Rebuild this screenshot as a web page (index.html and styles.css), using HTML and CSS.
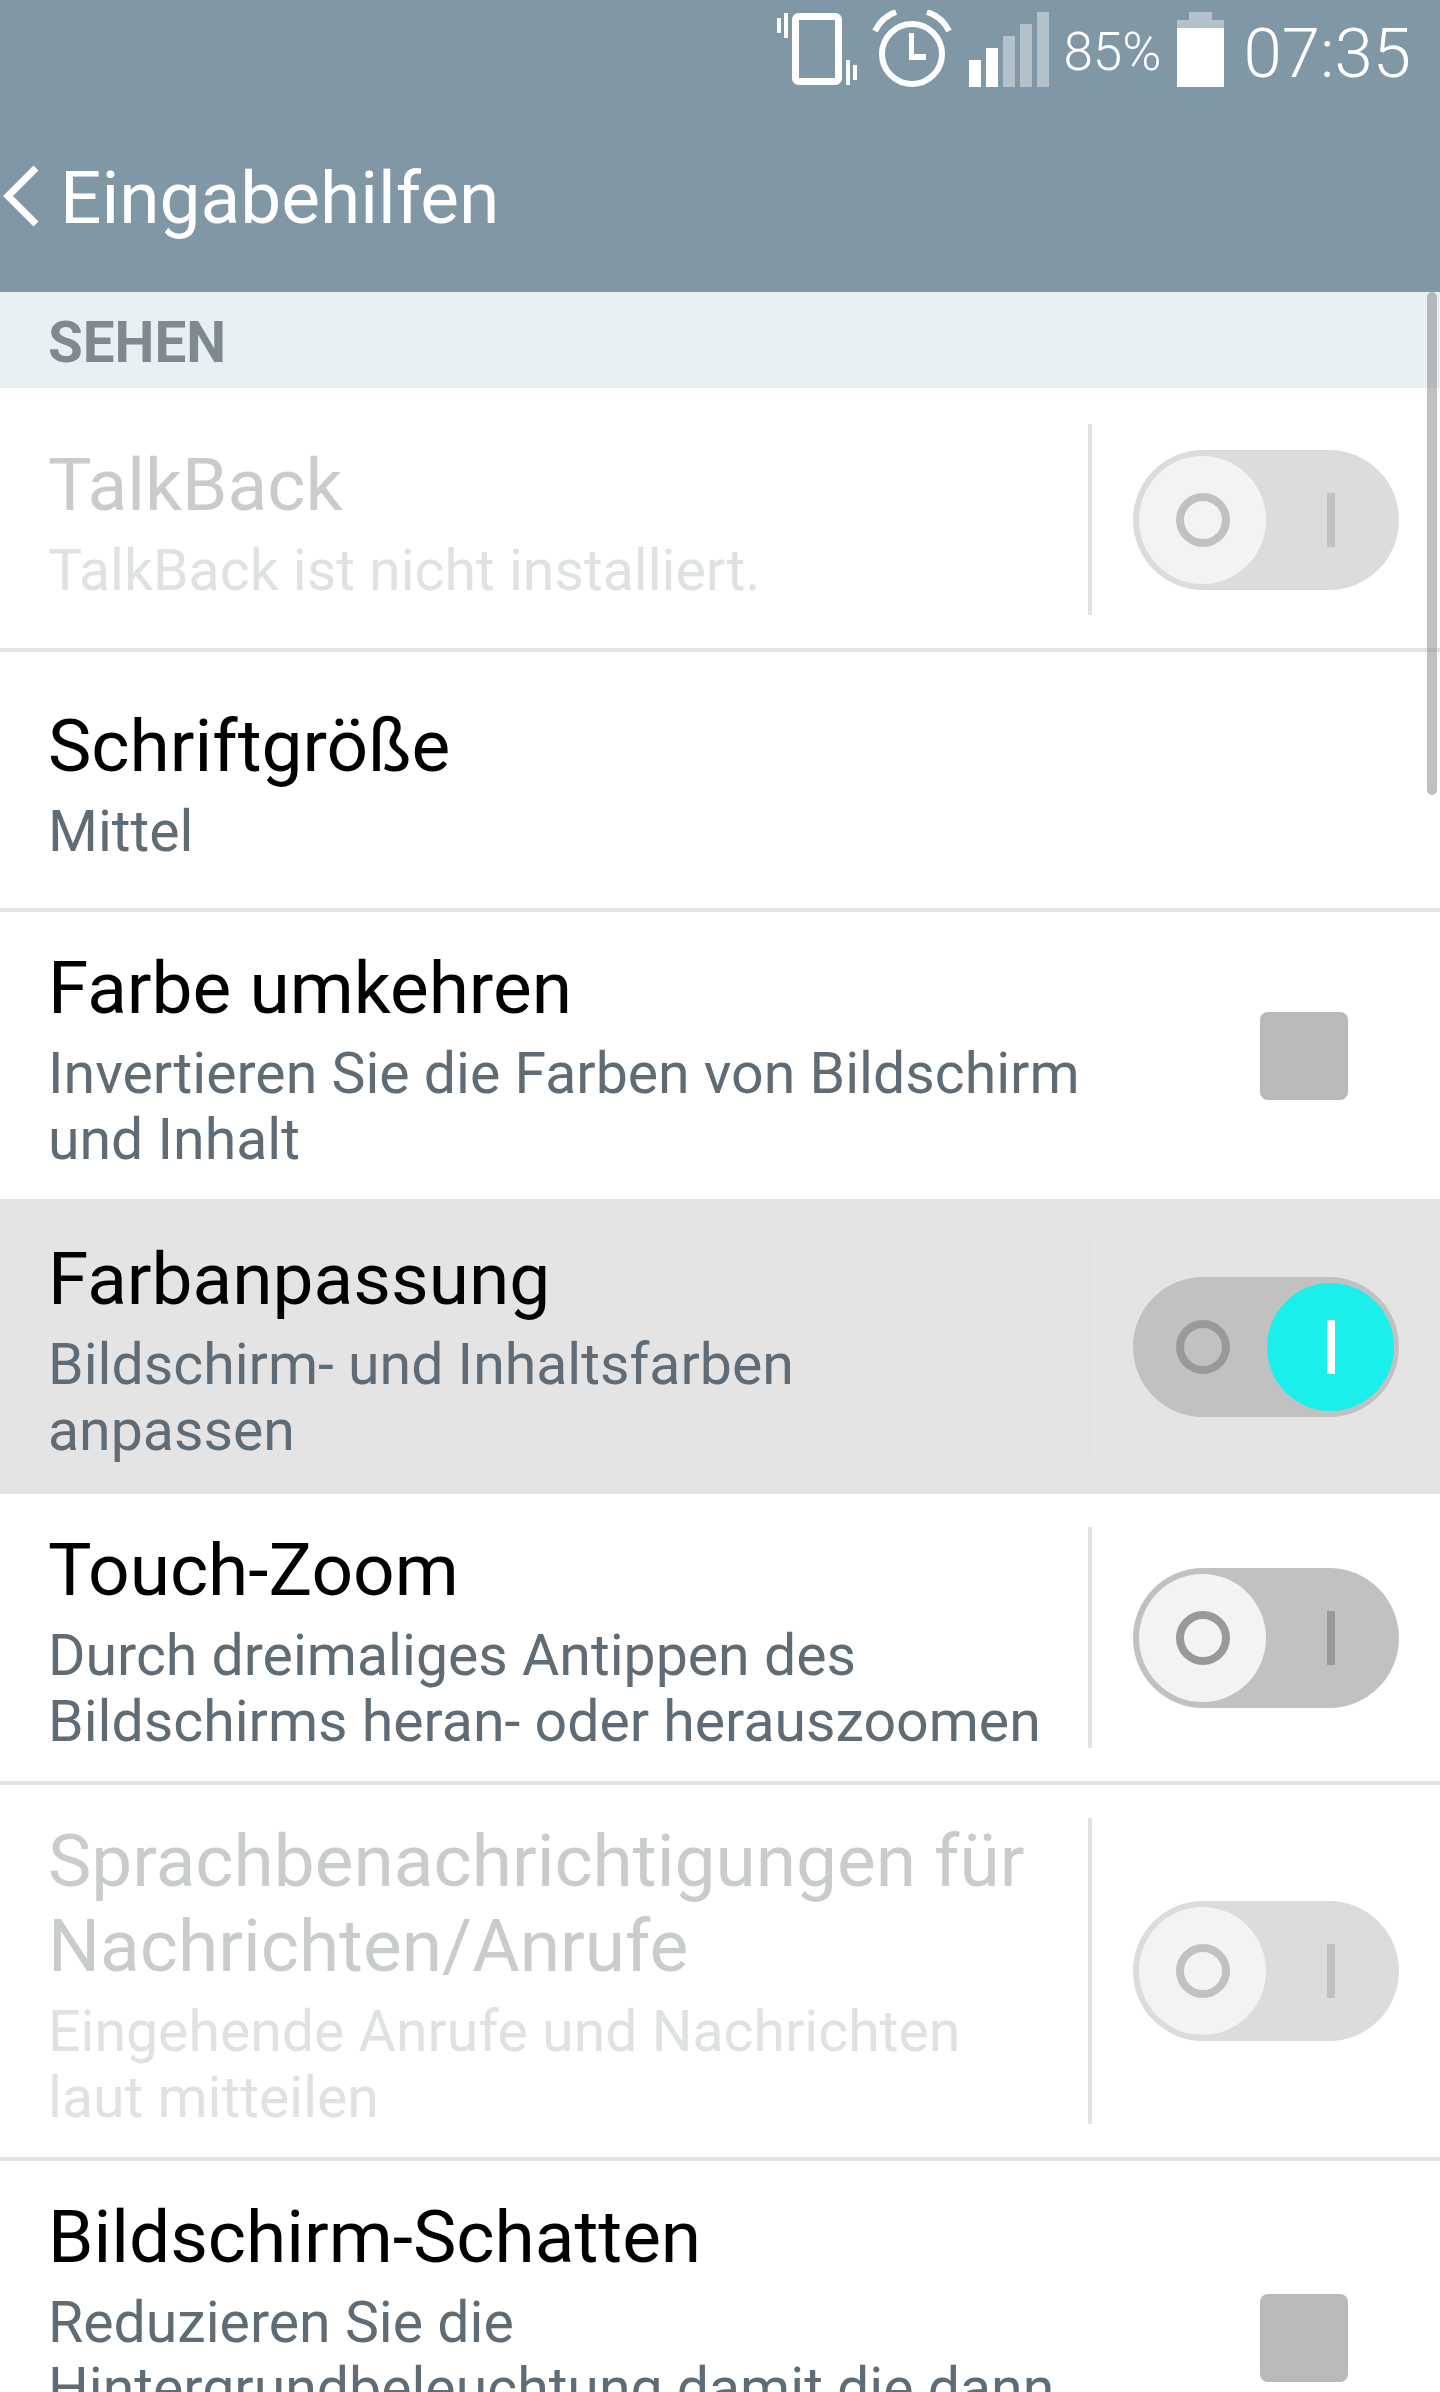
FILE: index.html
```html
<!DOCTYPE html>
<html>
<head>
  <title>Eingabehilfen</title>
  <link rel="stylesheet" href="styles.css">
</head>
<body>
  <div class="scrollbar"></div>

  <header class="header">
    <div class="status-bar">
      <!-- vibrate -->
      <svg class="icon-vibrate" width="80" height="72" viewBox="0 0 80 72">
        <rect x="18.5" y="3.5" width="43" height="65" rx="3" fill="none" stroke="#fff" stroke-width="7"/>
        <rect x="0" y="5" width="4" height="15" fill="#fff"/>
        <rect x="7" y="0" width="4" height="25" fill="#fff"/>
        <rect x="69" y="47" width="4" height="25" fill="#fff"/>
        <rect x="76" y="52" width="4" height="15" fill="#fff"/>
      </svg>
      <!-- alarm -->
      <svg class="icon-alarm" width="80" height="77" viewBox="0 0 80 77">
        <circle cx="40" cy="44" r="30" fill="none" stroke="#fff" stroke-width="6"/>
        <path d="M37 23h5v21h12v6H37z" fill="#fff"/>
        <path d="M3 21C8 11 15 5 24 2" fill="none" stroke="#fff" stroke-width="6"/>
        <path d="M55 2C65 5 72 11 77 21" fill="none" stroke="#fff" stroke-width="6"/>
      </svg>
      <!-- signal -->
      <div class="signal">
        <span class="signal-bar bar-on h1"></span>
        <span class="signal-bar bar-on h2"></span>
        <span class="signal-bar h3"></span>
        <span class="signal-bar h4"></span>
        <span class="signal-bar h5"></span>
      </div>
      <span class="battery-text">85%</span>
      <div class="battery">
        <span class="battery-nub"></span>
        <span class="battery-body"></span>
      </div>
      <span class="clock">07:35</span>
    </div>
    <div class="title-bar">
      <svg class="back" width="36" height="62" viewBox="0 0 36 62">
        <path d="M33 3L5 31l28 28" fill="none" stroke="#fff" stroke-width="7"/>
      </svg>
      <h1 class="page-title">Eingabehilfen</h1>
    </div>
  </header>

  <div class="section">SEHEN</div>

  <div class="row first disabled">
    <div class="row-text short">
      <div class="row-title">TalkBack</div>
      <div class="row-sub">TalkBack ist nicht installiert.</div>
    </div>
    <div class="sep"></div>
    <div class="toggle">
      <span class="toggle-cell knob"><span class="ring"></span></span>
      <span class="toggle-cell"><span class="bar"></span></span>
    </div>
  </div>

  <div class="row">
    <div class="row-text">
      <div class="row-title">Schriftgröße</div>
      <div class="row-sub">Mittel</div>
    </div>
  </div>

  <div class="row">
    <div class="row-text">
      <div class="row-title">Farbe umkehren</div>
      <div class="row-sub">Invertieren Sie die Farben von Bildschirm und Inhalt</div>
    </div>
    <div class="checkbox"></div>
  </div>

  <div class="row pressed">
    <div class="row-text short">
      <div class="row-title">Farbanpassung</div>
      <div class="row-sub">Bildschirm- und Inhaltsfarben anpassen</div>
    </div>
    <div class="sep"></div>
    <div class="toggle on">
      <span class="toggle-cell"><span class="ring"></span></span>
      <span class="toggle-cell knob"><span class="bar"></span></span>
    </div>
  </div>

  <div class="row">
    <div class="row-text short">
      <div class="row-title">Touch-Zoom</div>
      <div class="row-sub">Durch dreimaliges Antippen des Bildschirms heran- oder herauszoomen</div>
    </div>
    <div class="sep"></div>
    <div class="toggle off">
      <span class="toggle-cell knob"><span class="ring"></span></span>
      <span class="toggle-cell"><span class="bar"></span></span>
    </div>
  </div>

  <div class="row disabled">
    <div class="row-text short">
      <div class="row-title">Sprachbenachrichtigungen für Nachrichten/Anrufe</div>
      <div class="row-sub">Eingehende Anrufe und Nachrichten laut mitteilen</div>
    </div>
    <div class="sep"></div>
    <div class="toggle">
      <span class="toggle-cell knob"><span class="ring"></span></span>
      <span class="toggle-cell"><span class="bar"></span></span>
    </div>
  </div>

  <div class="row tall">
    <div class="row-text">
      <div class="row-title">Bildschirm-Schatten</div>
      <div class="row-sub">Reduzieren Sie die Hintergrundbeleuchtung damit die dann</div>
    </div>
    <div class="checkbox"></div>
  </div>
</body>
</html>
```

FILE: styles.css
```css
html, body {
  margin: 0;
  height: 2392px;
  overflow: hidden;
}

body {
  position: relative;
  background-color: #fff;
  font-family: Roboto, "Liberation Sans", sans-serif;
}

.header {
  height: 292px;
  background-color: #8097a5;
  color: #fff;
}

.status-bar {
  display: flex;
  justify-content: flex-end;
  align-items: flex-start;
  height: 87px;
  padding-right: 29px;
}

.icon-vibrate {
  margin-top: 13px;
  margin-right: 15px;
}

.icon-alarm {
  margin-top: 10px;
  margin-right: 17px;
}

.signal {
  display: flex;
  align-items: flex-end;
  gap: 5px;
  height: 75px;
  margin-top: 12px;
  margin-right: 14px;
}

.signal-bar {
  width: 12px;
  background-color: #b3c2ca;
}

.bar-on {
  background-color: #fff;
}

.h1 { height: 27px; }
.h2 { height: 39px; }
.h3 { height: 51px; }
.h4 { height: 63px; }
.h5 { height: 75px; }

.battery-text {
  margin-top: 22px;
  margin-right: 16px;
  font-size: 53px;
  font-weight: 300;
  line-height: 60px;
}

.battery {
  display: flex;
  flex-direction: column;
  align-items: center;
  width: 47px;
  margin-top: 12px;
  margin-right: 19px;
}

.battery-nub {
  width: 23px;
  height: 8px;
  background-color: #b3c2ca;
}

.battery-body {
  width: 47px;
  height: 59px;
  border-top: 8px solid #b3c2ca;
  background-color: #fff;
}

.clock {
  margin-top: 14px;
  font-size: 69px;
  font-weight: 300;
  line-height: 80px;
}

.title-bar {
  display: flex;
  align-items: center;
  height: 85px;
  padding-top: 69px;
  padding-left: 3px;
}

.back {
  margin-right: 21px;
  margin-bottom: 5px;
}

.page-title {
  margin: 0;
  font-size: 73px;
  font-weight: 400;
  line-height: 85px;
}

.section {
  height: 96px;
  padding-left: 48px;
  background-color: #e8f0f3;
  color: #7f8a90;
  font-size: 56.5px;
  font-weight: 700;
  line-height: 102px;
}

.row {
  display: flex;
  align-items: center;
  box-sizing: border-box;
  min-height: 260px;
  padding: 33px 41px 33px 48px;
  border-bottom: 4px solid #e4e4e4;
}

.first {
  min-height: 264px;
  padding-top: 36px;
}

.row-text {
  flex: 1;
  min-width: 0;
  max-width: 1040px;
}

.row-text.short {
  max-width: 995px;
}

.row-title {
  margin-top: 1px;
  margin-bottom: -1px;
  color: #000;
  font-size: 73px;
  line-height: 85px;
}

.row-sub {
  margin-top: 11px;
  margin-bottom: -7px;
  color: #5f6b75;
  font-size: 57.2px;
  line-height: 66px;
}

.disabled .row-title {
  color: #c9cccd;
}

.disabled .row-sub {
  color: #dfe2e3;
}

.pressed {
  margin-top: -4px;
  padding-top: 37px;
  background-color: #e4e4e4;
}

.tall {
  min-height: 357px;
}

.tall .row-text {
  align-self: flex-start;
}

.sep {
  align-self: stretch;
  flex: none;
  width: 4px;
  margin-left: auto;
  background-color: #dfe3e5;
}

.toggle {
  display: grid;
  grid-template-columns: 127px 127px;
  gap: 1px;
  flex: none;
  box-sizing: border-box;
  width: 266px;
  height: 140px;
  margin-left: 41px;
  padding: 6px 5px 6px 6px;
  border-radius: 70px;
  background-color: #c1c1c1;
}

.disabled .toggle {
  background-color: #dcdcdc;
}

.toggle-cell {
  display: flex;
  align-items: center;
  justify-content: center;
  border-radius: 50%;
}

.toggle-cell.knob {
  background-color: #f3f3f3;
}

.toggle.on .toggle-cell.knob {
  background-color: #1befec;
}

.ring {
  box-sizing: border-box;
  width: 54px;
  height: 54px;
  border: 8px solid #999;
  border-radius: 50%;
}

.bar {
  width: 8px;
  height: 54px;
  background-color: #999;
}

.toggle.on .bar {
  background-color: #fff;
}

.disabled .ring {
  border-color: #c1c1c1;
}

.disabled .bar {
  background-color: #c1c1c1;
}

.checkbox {
  flex: none;
  width: 88px;
  height: 88px;
  margin-left: auto;
  margin-right: 51px;
  border-radius: 8px;
  background-color: #b9b9b9;
}

.scrollbar {
  position: absolute;
  top: 292px;
  left: 1427px;
  width: 10px;
  height: 503px;
  border-radius: 5px;
  background-color: rgba(128, 128, 128, 0.5);
}
```
